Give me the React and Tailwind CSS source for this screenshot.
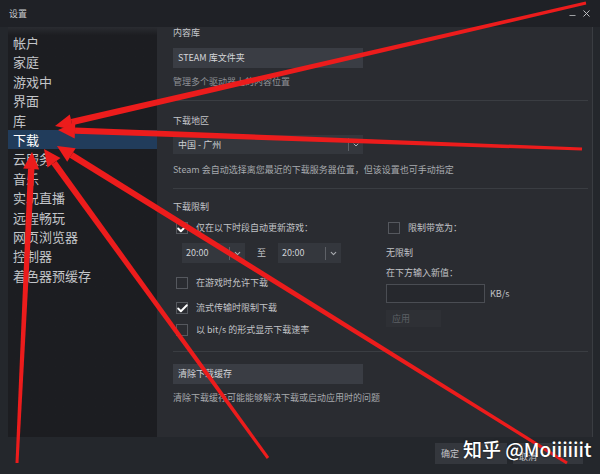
import React from "react";
import { Check, ChevronDown, X, Minus } from "lucide-react";

const FONT = { fontFamily: '"Noto Sans CJK SC", "Noto Sans", sans-serif' };

const navItems = [
  "帐户",
  "家庭",
  "游戏中",
  "界面",
  "库",
  "下载",
  "云服务",
  "音乐",
  "实况直播",
  "远程畅玩",
  "网页浏览器",
  "控制器",
  "着色器预缓存",
];

// red annotation arrows: [tailX, tailY, tipX, tipY]
const arrows = [
  [586, 3, 55, 126],
  [582, 149, 58, 130],
  [567, 463, 57, 146],
  [268, 458, 44, 149],
  [17, 463, 32, 152],
];

function arrowShape(tx, ty, hx, hy) {
  const dx = hx - tx;
  const dy = hy - ty;
  const len = Math.sqrt(dx * dx + dy * dy);
  const ux = dx / len;
  const uy = dy / len;
  const px = -uy;
  const py = ux;
  const headLen = 17;
  const headW = 8;
  const bx = hx - ux * headLen;
  const by = hy - uy * headLen;
  const w0 = 1.5;
  const w1 = 3.2;
  const body = [
    [tx + px * w0, ty + py * w0],
    [bx + px * w1, by + py * w1],
    [bx - px * w1, by - py * w1],
    [tx - px * w0, ty - py * w0],
  ];
  const head = [
    [hx, hy],
    [bx + px * headW, by + py * headW],
    [bx - px * headW, by - py * headW],
  ];
  const fmt = (pts) => pts.map((p) => p[0].toFixed(1) + "," + p[1].toFixed(1)).join(" ");
  return { body: fmt(body), head: fmt(head) };
}

function Checkbox({ checked }) {
  return (
    <div className="relative w-[12px] h-[12px] border border-[#55585e] bg-[#2a2c31] shrink-0">
      {checked && (
        <Check
          size={13}
          strokeWidth={3.5}
          className="absolute -left-[1px] -top-[1px] text-white"
        />
      )}
    </div>
  );
}

function CheckRow({ checked, label }) {
  return (
    <div className="flex items-center h-[12px] pl-[3px] gap-[8px]">
      <Checkbox checked={checked} />
      <span className="text-[9px] leading-[12px] text-[#c2c4c8]">{label}</span>
    </div>
  );
}

function TimeSelect({ value }) {
  return (
    <div className="flex items-center w-[63px] h-[20px] bg-[#34373d]">
      <span className="flex-1 pl-[4px] text-[9px] text-[#d0d2d5]">{value}</span>
      <div className="w-px h-[13px] bg-[#5e6167]" />
      <div className="w-[15px] flex justify-center">
        <ChevronDown size={9} strokeWidth={3} className="text-[#a9acb0]" />
      </div>
    </div>
  );
}

function Divider() {
  return <div className="h-px bg-[#3a3d42]" />;
}

export default function App() {
  return (
    <div
      className="relative w-[600px] h-[474px] overflow-hidden bg-[#24272c] flex flex-col"
      style={FONT}
    >
      {/* title bar */}
      <div className="h-[27px] flex items-center justify-between pl-[9px] pr-[8px] bg-[#1f2126]">
        <span className="text-[9px] text-[#c8cacd]">设置</span>
        <div className="flex items-center gap-[4px] text-[#c9cbce]">
          <Minus size={9} strokeWidth={2} className="mt-[4px]" />
          <X size={11} strokeWidth={2} />
        </div>
      </div>

      {/* body */}
      <div className="h-[410px] flex pl-[8px] pr-[7px]">
        <div className="w-[149px] bg-[#1c1d21] pt-[6px] bg-gradient-to-b from-[#2a2c31] from-[0%] to-[#1c1d21] to-[2%]">
          {navItems.map((item) => (
            <div
              key={item}
              className={
                "h-[19.4px] leading-[19.4px] pl-[5px] text-[13px] " +
                (item === "下载" ? "bg-[#213c5b] text-white" : "text-[#c3c5c9]")
              }
            >
              {item}
            </div>
          ))}
        </div>

        <div className="flex-1 bg-[#2a2c31] border-r border-[#3a3d42] pl-[16px] pr-[4px] flex flex-col">
          <div className="text-[9px] leading-[12px] text-[#c4c6ca]">内容库</div>
          <div className="mt-[9px] w-[190px] h-[20px] bg-[#3a3d44] flex items-center pl-[5px] text-[9px] text-[#d5d7da]">
            STEAM 库文件夹
          </div>
          <div className="mt-[8px] text-[9px] leading-[12px] text-[#8e9196]">
            管理多个驱动器上的内容位置
          </div>
          <div className="mt-[12px]">
            <Divider />
          </div>

          <div className="mt-[14px] text-[9px] leading-[12px] text-[#c4c6ca]">下载地区</div>
          <div className="mt-[8px] w-[190px] h-[19px] bg-[#34373d] flex items-center">
            <span className="flex-1 pl-[5px] text-[9px] text-[#d0d2d5]">中国 - 广州</span>
            <div className="w-px h-[13px] bg-[#5e6167]" />
            <div className="w-[14px] flex justify-center">
              <ChevronDown size={8} strokeWidth={3} className="text-[#a9acb0]" />
            </div>
          </div>
          <div className="mt-[10px] text-[9px] leading-[12px] text-[#a7aaae]">
            Steam 会自动选择离您最近的下载服务器位置，但该设置也可手动指定
          </div>
          <div className="mt-[12px]">
            <Divider />
          </div>

          <div className="mt-[12px] text-[9px] leading-[12px] text-[#c4c6ca]">下载限制</div>
          <div className="flex">
            <div className="w-[213px] flex flex-col">
              <div className="mt-[9px]">
                <CheckRow checked label="仅在以下时段自动更新游戏：" />
              </div>
              <div className="mt-[9px] flex items-center pl-[9px]">
                <TimeSelect value="20:00" />
                <span className="w-[33px] text-center text-[9px] text-[#c2c4c8]">至</span>
                <TimeSelect value="20:00" />
              </div>
              <div className="mt-[14px]">
                <CheckRow label="在游戏时允许下载" />
              </div>
              <div className="mt-[13px]">
                <CheckRow checked label="流式传输时限制下载" />
              </div>
              <div className="mt-[10px]">
                <CheckRow label="以 bit/s 的形式显示下载速率" />
              </div>
            </div>

            <div className="flex flex-col">
              <div className="mt-[9px] -ml-[1px]">
                <CheckRow label="限制带宽为：" />
              </div>
              <div className="mt-[13px] text-[9px] leading-[12px] text-[#c2c4c8]">无限制</div>
              <div className="mt-[8px] text-[9px] leading-[12px] text-[#c2c4c8]">
                在下方输入新值：
              </div>
              <div className="mt-[5px] flex items-center gap-[5px]">
                <div className="w-[99px] h-[19px] border border-[#4a4d53] bg-[#26282d]" />
                <span className="text-[9px] text-[#c2c4c8]">KB/s</span>
              </div>
              <div className="mt-[7px] w-[55px] h-[17px] bg-[#2e3035] flex items-center pl-[6px] text-[9px] text-[#5d6065]">
                应用
              </div>
            </div>
          </div>

          <div className="mt-[15px]">
            <Divider />
          </div>
          <div className="mt-[12px] w-[190px] h-[20px] bg-[#3a3d44] flex items-center pl-[5px] text-[9px] text-[#d5d7da]">
            清除下载缓存
          </div>
          <div className="mt-[8px] text-[9px] leading-[12px] text-[#a7aaae]">
            清除下载缓存可能能够解决下载或启动应用时的问题
          </div>
        </div>
      </div>

      {/* footer */}
      <div className="flex-1 flex items-start justify-end pt-[6px] pr-[17px] gap-[6px]">
        <div className="w-[72px] h-[21px] bg-[#34373d] flex items-center pl-[6px] text-[9px] text-[#c2c4c8]">
          确定
        </div>
        <div className="w-[70px] h-[21px] bg-[#34373d] flex items-end pb-[2px] pl-[6px] text-[9px] leading-[10px] text-[#c2c4c8]">
          取消
        </div>
      </div>

      {/* annotation arrows */}
      <svg
        className="absolute inset-0 pointer-events-none"
        width="600"
        height="474"
        viewBox="0 0 600 474"
      >
        {arrows.map((a, i) => {
          const s = arrowShape(a[0], a[1], a[2], a[3]);
          return (
            <g key={i} fill="#ec1c1c">
              <polygon points={s.body} />
              <polygon points={s.head} />
            </g>
          );
        })}
      </svg>

      {/* watermark */}
      <div className="absolute left-[463px] top-[436px] text-[19px] leading-[26px] font-medium text-white [text-shadow:0_0_2px_rgba(0,0,0,0.6)]">
        知乎 @Moiiiiiit
      </div>
    </div>
  );
}
